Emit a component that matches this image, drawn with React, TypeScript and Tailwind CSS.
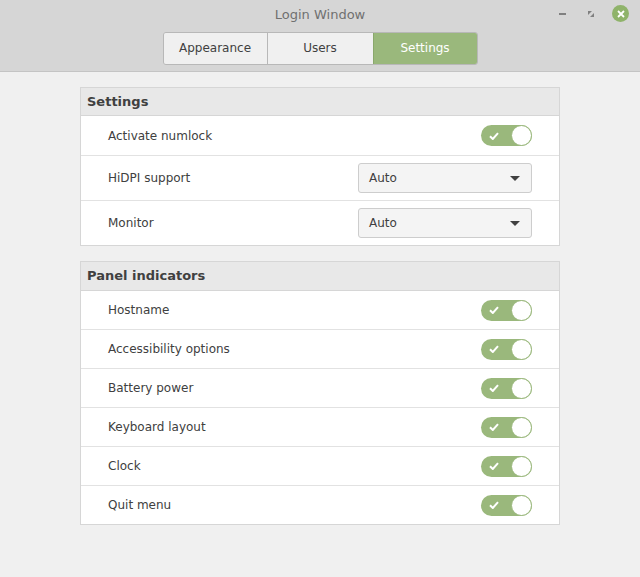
import React from 'react';

const font = { fontFamily: '"DejaVu Sans", "Noto Sans", sans-serif' };

function Toggle() {
  return (
    <div className="relative flex h-[21px] w-[51px] items-center rounded-full bg-[#9ab87c]">
      <svg className="ml-[8px]" width="10" height="8" viewBox="0 0 10 8">
        <path d="M1 4.2 L3.8 7 L9 1.2" fill="none" stroke="white" strokeWidth="2" />
      </svg>
      <div className="absolute right-0 top-0 h-[21px] w-[21px] rounded-full border border-[#9ab87c] bg-white" />
    </div>
  );
}

function Select({ value }: { value: string }) {
  return (
    <div className="flex h-[30px] w-[174px] items-center justify-between rounded-[3px] border border-[#cdcdcd] bg-[#f4f4f4] pl-[10px] pr-[11px] text-[12px] text-[#404040]">
      <span>{value}</span>
      <svg width="10" height="5" viewBox="0 0 10 5">
        <path d="M0 0 L10 0 L5 5 Z" fill="#404040" />
      </svg>
    </div>
  );
}

function Row({ label, h, children, last }: { label: string; h: string; children: React.ReactNode; last?: boolean }) {
  return (
    <div className={`flex ${h} items-center justify-between pl-[27px] pr-[27px] ${last ? '' : 'border-b border-[#e2e2e2]'}`}>
      <span className="text-[12px] text-[#404040]">{label}</span>
      {children}
    </div>
  );
}

function Section({ title, h, children }: { title: string; h: string; children: React.ReactNode }) {
  return (
    <div className="border border-[#d6d6d6] bg-white">
      <div className={`flex ${h} items-center border-b border-[#d6d6d6] bg-[#e8e8e8] px-[6px] text-[13px] font-bold text-[#404040]`}>
        {title}
      </div>
      {children}
    </div>
  );
}

export default function App() {
  const indicators = ['Hostname', 'Accessibility options', 'Battery power', 'Keyboard layout', 'Clock', 'Quit menu'];

  return (
    <div className="flex h-[577px] w-[640px] flex-col bg-[#f0f0f0]" style={font}>
      {/* Header bar */}
      <div className="relative h-[72px] shrink-0 border-b border-[#c4c4c4] bg-[#d6d6d6]">
        <div className="pt-[5px] text-center text-[13px] text-[#707070]">Login Window</div>
        <div className="absolute right-[11px] top-[5px] flex items-center gap-[13px]">
          <div className="flex h-[16px] w-[16px] items-center justify-center">
            <div className="h-[2px] w-[7px] bg-[#808080]" />
          </div>
          <svg width="16" height="16" viewBox="0 0 16 16">
            <path d="M5 5 L9 5 L5 9 Z M11 11 L7 11 L11 7 Z" fill="#808080" />
          </svg>
          <div className="flex h-[17px] w-[17px] items-center justify-center rounded-full bg-[#8fb36a]">
            <svg width="8" height="8" viewBox="0 0 8 8">
              <path d="M1 1 L7 7 M7 1 L1 7" stroke="white" strokeWidth="1.8" />
            </svg>
          </div>
        </div>
        <div className="mt-[7px] flex justify-center">
          <div className="flex h-[33px] overflow-hidden rounded-[3px] border border-[#b8b8b8] text-[12px]">
            <div className="flex w-[104px] items-center justify-center border-r border-[#b8b8b8] bg-[#f0f0f0] text-[#404040]">Appearance</div>
            <div className="flex w-[105px] items-center justify-center bg-[#f0f0f0] text-[#404040]">Users</div>
            <div className="flex w-[104px] items-center justify-center border-l border-[#8aa86c] bg-[#9ab87c] text-white">Settings</div>
          </div>
        </div>
      </div>

      {/* Content */}
      <div className="flex flex-col gap-[15px] px-[80px] pt-[15px]">
        <Section title="Settings" h="h-[28px]">
          <Row label="Activate numlock" h="h-[40px]">
            <Toggle />
          </Row>
          <Row label="HiDPI support" h="h-[45px]">
            <Select value="Auto" />
          </Row>
          <Row label="Monitor" h="h-[44px]" last>
            <Select value="Auto" />
          </Row>
        </Section>

        <Section title="Panel indicators" h="h-[29px]">
          {indicators.map((name, i) => (
            <Row key={name} label={name} h={i === indicators.length - 1 ? 'h-[38px]' : 'h-[39px]'} last={i === indicators.length - 1}>
              <Toggle />
            </Row>
          ))}
        </Section>
      </div>
    </div>
  );
}
